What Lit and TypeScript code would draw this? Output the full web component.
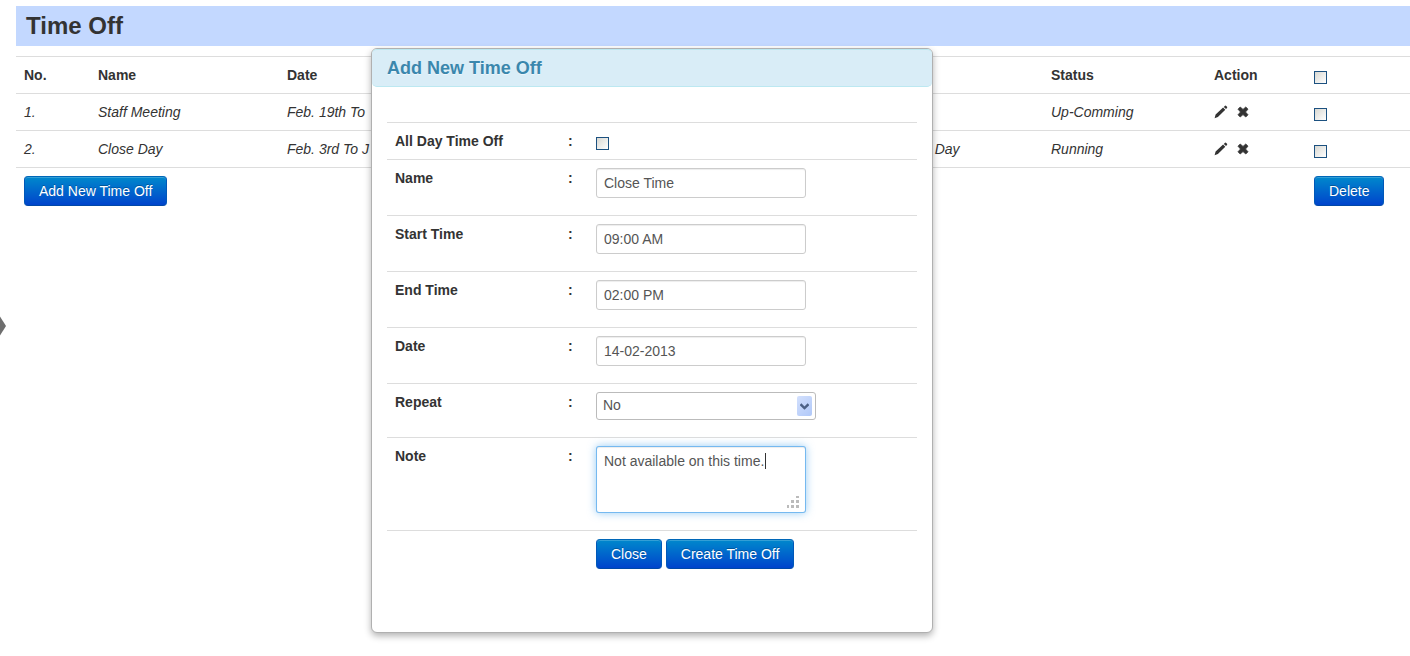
import { LitElement, html, css, svg } from "lit";
import { customElement, property } from "lit/decorators.js";

interface TimeOff {
  name: string;
  date: string;
  note: string;
  status: string;
}

const entries: TimeOff[] = [
  { name: "Staff Meeting", date: "Feb. 19th To", note: "", status: "Up-Comming" },
  { name: "Close Day", date: "Feb. 3rd To J", note: "Close Day", status: "Running" },
];

const pencil = svg`<path d="M0.6 13.2 L1.6 9.6 L9.1 2.6 L11.3 4.8 L3.9 12.1 Z M9.8 1.9 L11 0.8 Q11.6 0.4 12.2 0.9 L13 1.7 Q13.5 2.3 13 2.9 L12 4.1 Z"/>`;
const cross = svg`<path d="M2 4.2 L4.2 2 L7 4.4 L9.8 2 L12 4.2 L9.5 7 L12 9.8 L9.8 12 L7 9.6 L4.2 12 L2 9.8 L4.5 7 Z" stroke="#333" stroke-width="0.8" stroke-linejoin="round"/>`;

const shared = css`
  * {
    box-sizing: border-box;
  }
  button,
  input,
  select,
  textarea {
    font: inherit;
    margin: 0;
  }
  .check {
    appearance: none;
    display: block;
    width: 13px;
    height: 13px;
    margin: 6px 0 0;
    border: 1px solid #1c5180;
    background: linear-gradient(135deg, #d8d8d2, #fff);
  }
  .btn {
    padding: 4px 14px;
    border: 1px solid;
    border-color: #0067b8 #0058b8 #0048a8;
    border-radius: 4px;
    color: #fff;
    line-height: 20px;
    white-space: nowrap;
    text-shadow: 0 -1px 0 rgba(0, 0, 0, 0.25);
    background: linear-gradient(#0088cc, #0044cc);
    box-shadow: inset 0 1px 0 rgba(255, 255, 255, 0.2);
    cursor: pointer;
  }
`;

@customElement("time-off-table")
export class TimeOffTable extends LitElement {
  @property({ attribute: false }) rows: TimeOff[] = [];

  static styles = [
    shared,
    css`
      :host {
        display: block;
      }
      .list {
        width: 100%;
        table-layout: fixed;
        border-collapse: separate;
        border-spacing: 0;
      }
      .no { width: 74px; }
      .name { width: 189px; }
      .note { width: 156px; }
      .status { width: 163px; }
      .action { width: 100px; }
      .select { width: 104px; }
      th,
      td {
        height: 37px;
        padding: 8px;
        border-top: 1px solid #ddd;
        text-align: left;
        vertical-align: top;
        line-height: 20px;
        white-space: nowrap;
      }
      td {
        font-style: italic;
      }
      .foot {
        font-style: normal;
      }
      .actions {
        display: flex;
        align-items: center;
        gap: 8px;
        height: 20px;
      }
      .icon {
        display: block;
        width: 14px;
        height: 14px;
        padding: 0;
        border: 0;
        background: none;
        cursor: pointer;
      }
      .icon svg {
        display: block;
        fill: #333;
      }
    `,
  ];

  render() {
    return html`
      <table class="list">
        <colgroup>
          <col class="no" /><col class="name" /><col /><col class="note" />
          <col class="status" /><col class="action" /><col class="select" />
        </colgroup>
        <thead>
          <tr>
            <th>No.</th>
            <th>Name</th>
            <th>Date</th>
            <th>Note</th>
            <th>Status</th>
            <th>Action</th>
            <th><input class="check" type="checkbox" aria-label="Select all" /></th>
          </tr>
        </thead>
        <tbody>
          ${this.rows.map(
            (row, i) => html`
              <tr>
                <td>${i + 1}.</td>
                <td>${row.name}</td>
                <td>${row.date}</td>
                <td>${row.note}</td>
                <td>${row.status}</td>
                <td>
                  <div class="actions">
                    <button class="icon" aria-label="Edit">
                      <svg width="14" height="14" viewBox="0 0 14 14">${pencil}</svg>
                    </button>
                    <button class="icon" aria-label="Remove">
                      <svg width="14" height="14" viewBox="0 0 14 14">${cross}</svg>
                    </button>
                  </div>
                </td>
                <td><input class="check" type="checkbox" aria-label="Select row" /></td>
              </tr>
            `
          )}
        </tbody>
        <tfoot>
          <tr>
            <td class="foot" colspan="6"><button class="btn">Add New Time Off</button></td>
            <td class="foot"><button class="btn">Delete</button></td>
          </tr>
        </tfoot>
      </table>
    `;
  }
}

@customElement("time-off-dialog")
export class TimeOffDialog extends LitElement {
  static styles = [
    shared,
    css`
      :host {
        display: block;
      }
      .dialog {
        width: 562px;
        padding-bottom: 40px;
        border: 1px solid #b0b0b0;
        border-radius: 6px;
        background: #fff;
        box-shadow: 0 3px 7px rgba(0, 0, 0, 0.3);
      }
      .title {
        margin: 0;
        padding: 8px 15px;
        border: 1px solid #bce8f1;
        border-left: 0;
        border-right: 0;
        border-radius: 5px;
        background: #d9edf7;
        color: #3a87ad;
        font-size: 18px;
        line-height: 20px;
        text-shadow: 0 1px 0 rgba(255, 255, 255, 0.5);
      }
      .form {
        padding: 35px 15px 15px;
      }
      .row {
        display: grid;
        grid-template-columns: 173px 28px 1fr;
        border-top: 1px solid #ddd;
        line-height: 20px;
      }
      .label,
      .colon,
      .field {
        padding: 8px;
        font-weight: bold;
      }
      .field {
        font-weight: normal;
      }
      .field.spaced {
        padding-bottom: 17px;
      }
      .buttons {
        display: flex;
        gap: 4px;
        grid-column: 3;
      }
      .input,
      .area,
      .select {
        display: block;
        border: 1px solid #ccc;
        border-radius: 3px;
        background: #fff;
        color: #555;
        line-height: 20px;
        outline: none;
      }
      .input {
        width: 210px;
        height: 30px;
        padding: 4px 7px;
        box-shadow: inset 0 1px 1px rgba(0, 0, 0, 0.075);
      }
      .select {
        appearance: none;
        width: 220px;
        height: 28px;
        padding: 2px 6px 4px;
        border-color: #bbb;
      }
      .area {
        width: 210px;
        height: 67px;
        padding: 4px 7px;
        resize: none;
        overflow: hidden;
        border-color: rgba(82, 168, 236, 0.8);
        box-shadow: inset 0 1px 1px rgba(0, 0, 0, 0.075), 0 0 8px rgba(82, 168, 236, 0.6);
      }
      .wrap {
        position: relative;
        width: fit-content;
      }
      .drop {
        position: absolute;
        top: 4px;
        right: 4px;
        display: flex;
        align-items: center;
        justify-content: center;
        width: 15px;
        height: 20px;
        border-radius: 2px;
        background: linear-gradient(135deg, #d3e0fd, #b0c8f8);
        pointer-events: none;
      }
      .caret {
        position: absolute;
        top: 7px;
        left: 169px;
        width: 1px;
        height: 16px;
        background: #333;
      }
      .grip {
        position: absolute;
        right: 7px;
        bottom: 5px;
        fill: #bbb;
        pointer-events: none;
      }
    `,
  ];

  private textRow(id: string, label: string, value: string) {
    return html`
      <div class="row">
        <label class="label" for=${id}>${label}</label>
        <span class="colon">:</span>
        <div class="field spaced"><input class="input" id=${id} type="text" .value=${value} /></div>
      </div>
    `;
  }

  render() {
    return html`
      <section class="dialog" role="dialog" aria-labelledby="title">
        <h3 class="title" id="title">Add New Time Off</h3>
        <form class="form">
          <div class="row">
            <label class="label" for="allday">All Day Time Off</label>
            <span class="colon">:</span>
            <div class="field"><input class="check" id="allday" type="checkbox" /></div>
          </div>
          ${this.textRow("name", "Name", "Close Time")}
          ${this.textRow("start", "Start Time", "09:00 AM")}
          ${this.textRow("end", "End Time", "02:00 PM")}
          ${this.textRow("date", "Date", "14-02-2013")}
          <div class="row">
            <label class="label" for="repeat">Repeat</label>
            <span class="colon">:</span>
            <div class="field spaced">
              <div class="wrap">
                <select class="select" id="repeat"><option>No</option></select>
                <span class="drop">
                  <svg width="9" height="7" viewBox="0 0 9 7">
                    <path d="M0.5 1.2 L4.5 5 L8.5 1.2" fill="none" stroke="#4d6185" stroke-width="2.4" />
                  </svg>
                </span>
              </div>
            </div>
          </div>
          <div class="row">
            <label class="label" for="note">Note</label>
            <span class="colon">:</span>
            <div class="field spaced">
              <div class="wrap">
                <textarea class="area" id="note" .value=${"Not available on this time."}></textarea>
                <span class="caret"></span>
                <svg class="grip" width="13" height="13" viewBox="0 0 13 13">
                  <path d="M10 1h3v2h-3z M5 5h3v3h-3z M10 5h3v3h-3z M1 10h2v3h-2z M5 10h3v3h-3z M10 10h3v3h-3z" />
                </svg>
              </div>
            </div>
          </div>
          <div class="row">
            <div class="field buttons">
              <button class="btn" type="button">Close</button>
              <button class="btn" type="button">Create Time Off</button>
            </div>
          </div>
        </form>
      </section>
    `;
  }
}

@customElement("app-root")
export class AppRoot extends LitElement {
  static styles = css`
    :host {
      display: block;
      position: relative;
      min-height: 100vh;
      box-sizing: border-box;
      padding: 6px 0 0 16px;
      overflow: hidden;
      background: #fff;
      color: #333;
      font: 14px/20px "Liberation Sans", Arial, sans-serif;
    }
    .heading {
      margin: 0 0 10px;
      padding: 0 10px;
      background: #c3d8ff;
      font-size: 24px;
      line-height: 40px;
    }
    .overlay {
      position: absolute;
      top: 48px;
      left: calc(50% - 334px);
    }
    .handle {
      position: absolute;
      top: 316px;
      left: 0;
      display: block;
      padding: 0;
      border: 0;
      background: none;
      cursor: pointer;
    }
    .handle svg {
      display: block;
      fill: #6e6e6e;
    }
  `;

  render() {
    return html`
      <h1 class="heading">Time Off</h1>
      <time-off-table .rows=${entries}></time-off-table>
      <button class="handle" aria-label="Open panel">
        <svg width="6" height="20" viewBox="0 0 6 20"><path d="M0 0.500 L6 10 L0 19.500 Z" /></svg>
      </button>
      <div class="overlay"><time-off-dialog></time-off-dialog></div>
    `;
  }
}
